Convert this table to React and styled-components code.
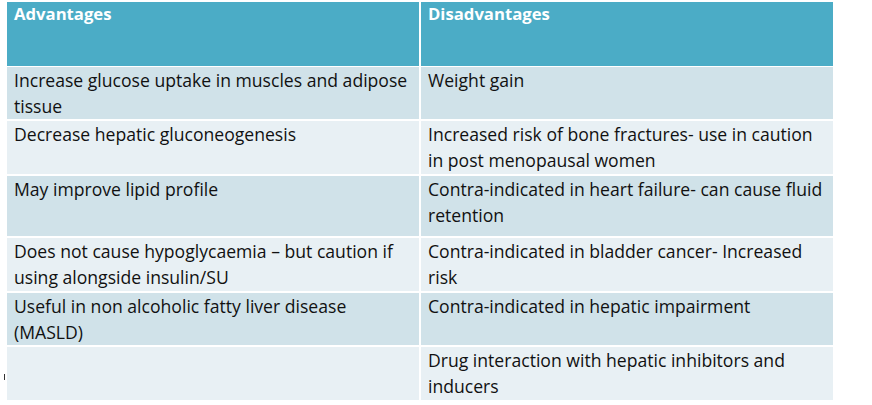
import React from "react";
import styled, { createGlobalStyle } from "styled-components";

const GlobalStyle = createGlobalStyle`
  html, body {
    margin: 0;
    padding: 0;
    background: #ffffff;
  }
  body {
    font-family: "Open Sans", Lato, "Liberation Sans", sans-serif;
  }
`;

const Page = styled.div`
  position: relative;
  width: 872px;
  height: 405px;
  padding: 2px 0 0 7px;
  box-sizing: border-box;
  overflow: hidden;
`;

const Table = styled.div`
  display: grid;
  grid-template-columns: 412px 412px;
  grid-template-rows: 63px 52px 53px 60px 53px 52px 53px;
  column-gap: 2px;
  row-gap: 2px;
  width: 826px;
`;

const HeadCell = styled.div`
  background: #4bacc6;
  color: #ffffff;
  font-weight: 700;
  font-size: 16.7px;
  line-height: 24px;
  padding: 0 7px;
  margin-bottom: -1px;
`;

const Cell = styled.div`
  background: ${({ $shade }) => ($shade ? "#d0e2e9" : "#e8f0f4")};
  color: #111111;
  font-size: 17.6px;
  line-height: 26px;
  padding: 0 7px;
  white-space: nowrap;
  overflow: hidden;
`;

const Line = styled.div``;

const StrayMark = styled.span`
  position: absolute;
  left: 4px;
  top: 374px;
  width: 1px;
  height: 6px;
  background: #333;
`;

// line breaks follow the slide
const rows = [
  [["Increase glucose uptake in muscles and adipose", "tissue"], ["Weight gain"]],
  [
    ["Decrease hepatic gluconeogenesis"],
    ["Increased risk of bone fractures- use in caution", "in post menopausal women"],
  ],
  [
    ["May improve lipid profile"],
    ["Contra-indicated in heart failure- can cause fluid", "retention"],
  ],
  [
    ["Does not cause hypoglycaemia \u2013 but caution if", "using alongside insulin/SU"],
    ["Contra-indicated in bladder cancer- Increased", "risk"],
  ],
  [
    ["Useful in non alcoholic fatty liver disease", "(MASLD)"],
    ["Contra-indicated in hepatic impairment"],
  ],
  [[], ["Drug interaction with hepatic inhibitors and", "inducers"]],
];

export default function App() {
  return (
    <Page>
      <GlobalStyle />
      <Table>
        <HeadCell>Advantages</HeadCell>
        <HeadCell>Disadvantages</HeadCell>
        {rows.map((r, i) =>
          r.map((lines, j) => (
            <Cell key={`${i}-${j}`} $shade={i % 2 === 0}>
              {lines.map((l) => (
                <Line key={l}>{l}</Line>
              ))}
            </Cell>
          ))
        )}
      </Table>
      <StrayMark />
    </Page>
  );
}
